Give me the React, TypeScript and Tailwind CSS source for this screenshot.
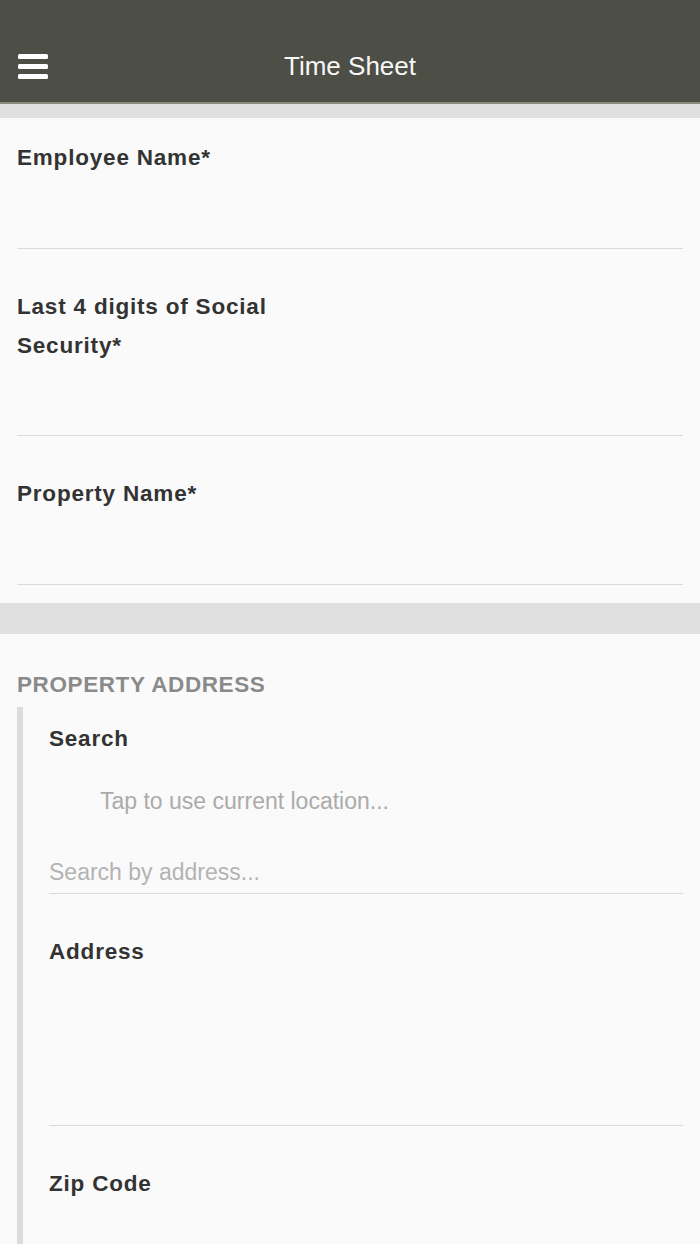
import React, { useState } from 'react';

interface FieldProps {
  label: string;
  inputHeight: string;
  labelWidth?: string;
  value: string;
  onChange: (v: string) => void;
}

const Field: React.FC<FieldProps> = ({ label, inputHeight, labelWidth, value, onChange }) => {
  return (
    <div className="mb-[18px] pt-[20px] border-b border-[#d9d9d9]">
      <label className={`block text-[22.5px] font-bold leading-[39px] tracking-[0.8px] text-[#333333] ${labelWidth ?? ''}`}>
        {label}
      </label>
      <input
        value={value}
        onChange={e => onChange(e.target.value)}
        className={`block w-full bg-transparent outline-none text-[23px] text-[#333333] ${inputHeight}`}
      />
    </div>
  );
};

const App: React.FC = () => {
  const [employee, setEmployee] = useState('');
  const [ssn, setSsn] = useState('');
  const [property, setProperty] = useState('');
  const [search, setSearch] = useState('');
  const [address, setAddress] = useState('');
  const [zip, setZip] = useState('');

  return (
    <div className="min-h-screen bg-[#fafafa] font-['Liberation_Sans',Arial,sans-serif]">
      {/* nav bar */}
      <header className="h-[104px] bg-[#4d4e45] border-b-2 border-[#8b8c7e] pt-[30px]">
        <div className="grid h-[72px] grid-cols-[1fr_auto_1fr] items-center px-[18px]">
          <button className="flex w-[30px] flex-col gap-[5px]" aria-label="Menu">
            <span className="block h-[5px] w-[30px] rounded-[1.5px] bg-white" />
            <span className="block h-[5px] w-[30px] rounded-[1.5px] bg-white" />
            <span className="block h-[5px] w-[30px] rounded-[1.5px] bg-white" />
          </button>
          <h1 className="text-[26px] font-normal text-[#f7f7f7]">Time Sheet</h1>
          <div />
        </div>
      </header>
      <div className="h-[14px] bg-[#e0e0e0]" />

      <div className="px-[17px]">
        <Field label="Employee Name*" inputHeight="h-[71px]" value={employee} onChange={setEmployee} />
        <Field
          label="Last 4 digits of Social Security*"
          labelWidth="max-w-[300px]"
          inputHeight="h-[70px]"
          value={ssn}
          onChange={setSsn}
        />
        <Field label="Property Name*" inputHeight="h-[71px]" value={property} onChange={setProperty} />
      </div>

      <div className="h-[31px] bg-[#e0e0e0]" />

      <section className="px-[17px] pt-[31px]">
        <h2 className="text-[22.5px] font-bold uppercase leading-[39px] tracking-[0.6px] text-[#8a8a8a]">
          Property Address
        </h2>
        <div className="mt-[3px] border-l-[6px] border-[#dcdcdc] pl-[26px] pb-[20px]">
          <div className="pt-[12px]">
            <div className="text-[22.5px] font-bold leading-[39px] tracking-[0.8px] text-[#333333]">Search</div>
            <button className="mt-[24px] block pl-[51px] text-left text-[23px] leading-[39px] text-[#ababab]">
              Tap to use current location...
            </button>
            <input
              value={search}
              onChange={e => setSearch(e.target.value)}
              placeholder="Search by address..."
              className="mt-[32px] block h-[41px] w-full border-b border-[#d9d9d9] bg-transparent pb-[1px] text-[23px] text-[#333333] outline-none placeholder:text-[#b3b3b3]"
            />
          </div>
          <div className="mt-[18px]">
            <Field label="Address" inputHeight="h-[154px]" value={address} onChange={setAddress} />
          </div>
          <div className="pt-[20px]">
            <div className="text-[22.5px] font-bold leading-[39px] tracking-[0.8px] text-[#333333]">Zip Code</div>
            <input
              value={zip}
              onChange={e => setZip(e.target.value)}
              className="block h-[60px] w-full bg-transparent text-[23px] text-[#333333] outline-none"
            />
          </div>
        </div>
      </section>
    </div>
  );
};

export default App;
